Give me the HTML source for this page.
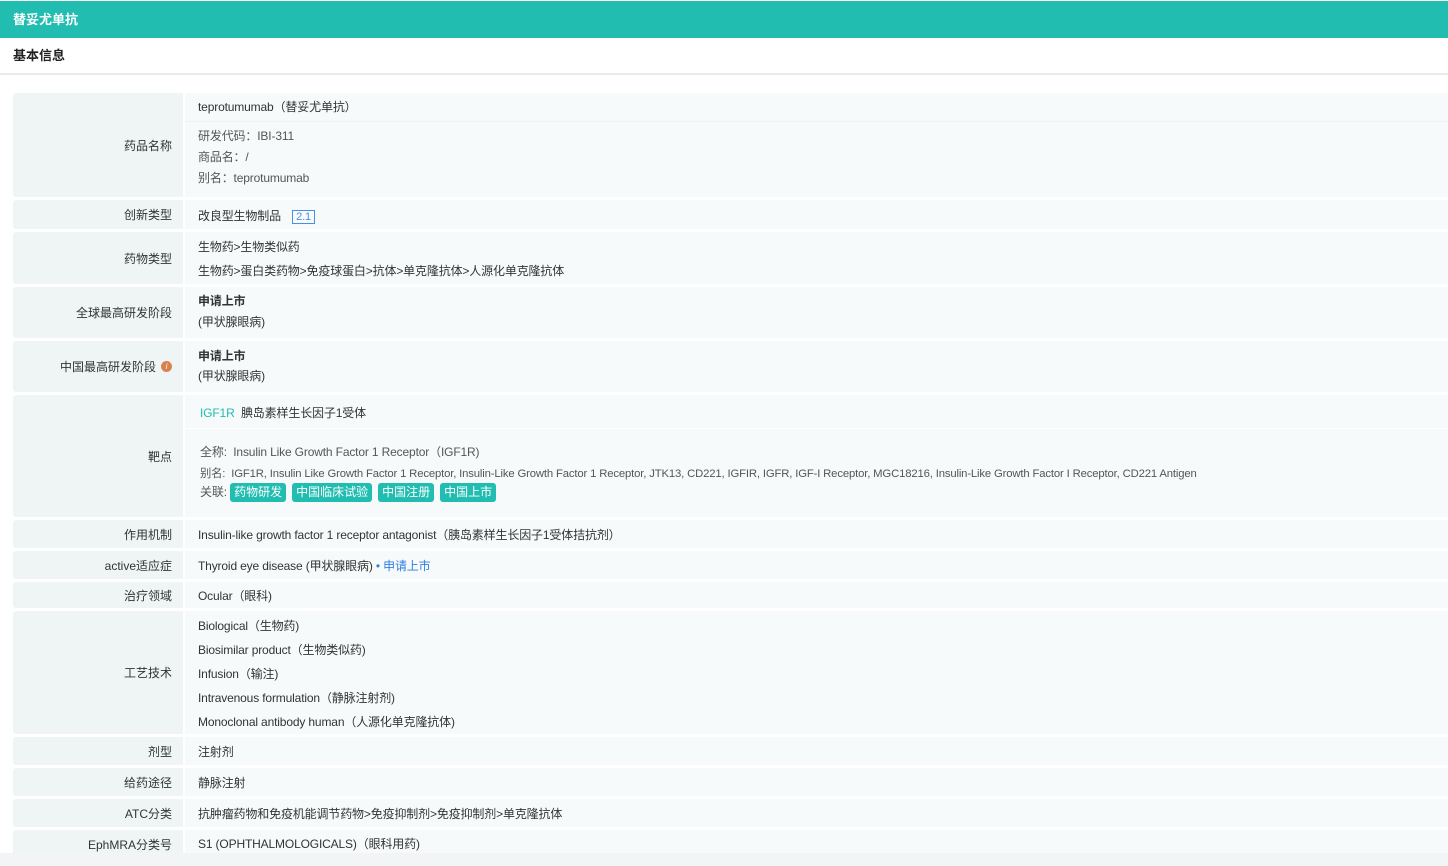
<!DOCTYPE html>
<html><head><meta charset="utf-8"><style>
*{margin:0;padding:0;box-sizing:border-box}
body{width:1448px;height:866px;overflow:hidden;background:#fff;font-family:"Liberation Sans","Noto Sans CJK SC",sans-serif;font-size:12px;color:#333;position:relative}
.hd{position:absolute;left:0;top:1px;width:1448px;height:37px;background:#20bdb0;color:#fff;font-weight:bold;font-size:13px;line-height:37px;padding-left:13px}
.sub{position:absolute;left:13px;top:45px;font-weight:bold;font-size:13px;color:#222}
.hl{position:absolute;left:0;top:73px;width:1448px;height:2px;background:#ebebeb}
.r{position:absolute;left:13px;width:1435px}
.l{position:absolute;left:0;top:0;bottom:0;width:170px;background:#eef5f4;border-radius:3px 0 0 3px;text-align:right;padding-right:11px;display:flex;align-items:center;justify-content:flex-end}
.v{position:absolute;left:172px;right:0;top:0;bottom:0;background:#f7fafa}
.t{position:absolute;left:13px;white-space:nowrap;letter-spacing:-0.15px}
.g{color:#555}
.tag{display:inline-block;background:#20bdb0;color:#fff;border-radius:3px;padding:0 4px;height:19px;line-height:19px;margin-right:6px;letter-spacing:0}
.bot{position:absolute;left:0;top:853px;width:1448px;height:13px;background:#f3f4f6}
</style></head><body>
<div class="hd">替妥尤单抗</div>
<div class="sub">基本信息</div>
<div class="hl"></div>

<div class="r" style="top:93px;height:104px"><div class="l">药品名称</div><div class="v">
<div class="t" style="top:5px">teprotumumab（替妥尤单抗）</div>
<div style="position:absolute;left:0;right:0;top:28px;height:1px;background:#eef2f2"></div>
<div class="t g" style="top:34px">研发代码：IBI-311</div>
<div class="t g" style="top:55px">商品名：/</div>
<div class="t g" style="top:76px">别名：teprotumumab</div></div></div>

<div class="r" style="top:200px;height:29px"><div class="l">创新类型</div><div class="v">
<div class="t" style="top:7px">改良型生物制品 <span style="margin-left:8px;border:1px solid #4a90e2;color:#4a90e2;padding:0 3px;font-size:11px">2.1</span></div></div></div>

<div class="r" style="top:232px;height:52px"><div class="l">药物类型</div><div class="v">
<div class="t" style="top:6px">生物药&gt;生物类似药</div>
<div class="t" style="top:30px">生物药&gt;蛋白类药物&gt;免疫球蛋白&gt;抗体&gt;单克隆抗体&gt;人源化单克隆抗体</div></div></div>

<div class="r" style="top:287px;height:51px"><div class="l">全球最高研发阶段</div><div class="v">
<div class="t" style="top:5px;font-weight:bold">申请上市</div>
<div class="t" style="top:26px">(甲状腺眼病)</div></div></div>

<div class="r" style="top:341px;height:51px"><div class="l">中国最高研发阶段<span style="display:inline-block;width:11px;height:11px;border-radius:50%;background:#d9824f;color:#fff;font-size:8px;line-height:11px;text-align:center;margin-left:5px;font-style:italic">i</span></div><div class="v">
<div class="t" style="top:6px;font-weight:bold">申请上市</div>
<div class="t" style="top:26px">(甲状腺眼病)</div></div></div>

<div class="r" style="top:395px;height:122px"><div class="l">靶点</div><div class="v">
<div class="t" style="top:9px;left:15px"><span style="color:#20bdb0">IGF1R</span>&nbsp;&nbsp;腆岛素样生长因子1受体</div>
<div style="position:absolute;left:0;right:0;top:33px;height:1px;background:#fff"></div>
<div class="t g" style="top:48px;left:15px">全称:&nbsp; Insulin Like Growth Factor 1 Receptor（IGF1R)</div>
<div class="t g" style="top:70px;left:15px;font-size:11.3px">别名:&nbsp; IGF1R, Insulin Like Growth Factor 1 Receptor, Insulin-Like Growth Factor 1 Receptor, JTK13, CD221, IGFIR, IGFR, IGF-I Receptor, MGC18216, Insulin-Like Growth Factor I Receptor, CD221 Antigen</div>
<div class="t g" style="top:88px;left:15px">关联:&nbsp;<span class="tag">药物研发</span><span class="tag">中国临床试验</span><span class="tag">中国注册</span><span class="tag">中国上市</span></div></div></div>

<div class="r" style="top:520px;height:28px"><div class="l">作用机制</div><div class="v"><div class="t" style="top:6px">Insulin-like growth factor 1 receptor antagonist（胰岛素样生长因子1受体拮抗剂）</div></div></div>

<div class="r" style="top:551px;height:28px"><div class="l">active适应症</div><div class="v"><div class="t" style="top:6px">Thyroid eye disease (甲状腺眼病) <span style="color:#2f7fe0">• 申请上市</span></div></div></div>

<div class="r" style="top:582px;height:26px"><div class="l">治疗领域</div><div class="v"><div class="t" style="top:5px">Ocular（眼科)</div></div></div>

<div class="r" style="top:611px;height:123px"><div class="l">工艺技术</div><div class="v">
<div class="t" style="top:6px">Biological（生物药)</div>
<div class="t" style="top:30px">Biosimilar product（生物类似药)</div>
<div class="t" style="top:54px">Infusion（输注)</div>
<div class="t" style="top:78px">Intravenous formulation（静脉注射剂)</div>
<div class="t" style="top:102px">Monoclonal antibody human（人源化单克隆抗体)</div></div></div>

<div class="r" style="top:737px;height:28px"><div class="l">剂型</div><div class="v"><div class="t" style="top:6px">注射剂</div></div></div>
<div class="r" style="top:768px;height:28px"><div class="l">给药途径</div><div class="v"><div class="t" style="top:6px">静脉注射</div></div></div>
<div class="r" style="top:799px;height:28px"><div class="l">ATC分类</div><div class="v"><div class="t" style="top:6px">抗肿瘤药物和免疫机能调节药物&gt;免疫抑制剂&gt;免疫抑制剂&gt;单克隆抗体</div></div></div>
<div class="r" style="top:830px;height:28px"><div class="l">EphMRA分类号</div><div class="v"><div class="t" style="top:5px">S1 (OPHTHALMOLOGICALS)（眼科用药)</div></div></div>
<div class="bot"></div>
</body></html>
